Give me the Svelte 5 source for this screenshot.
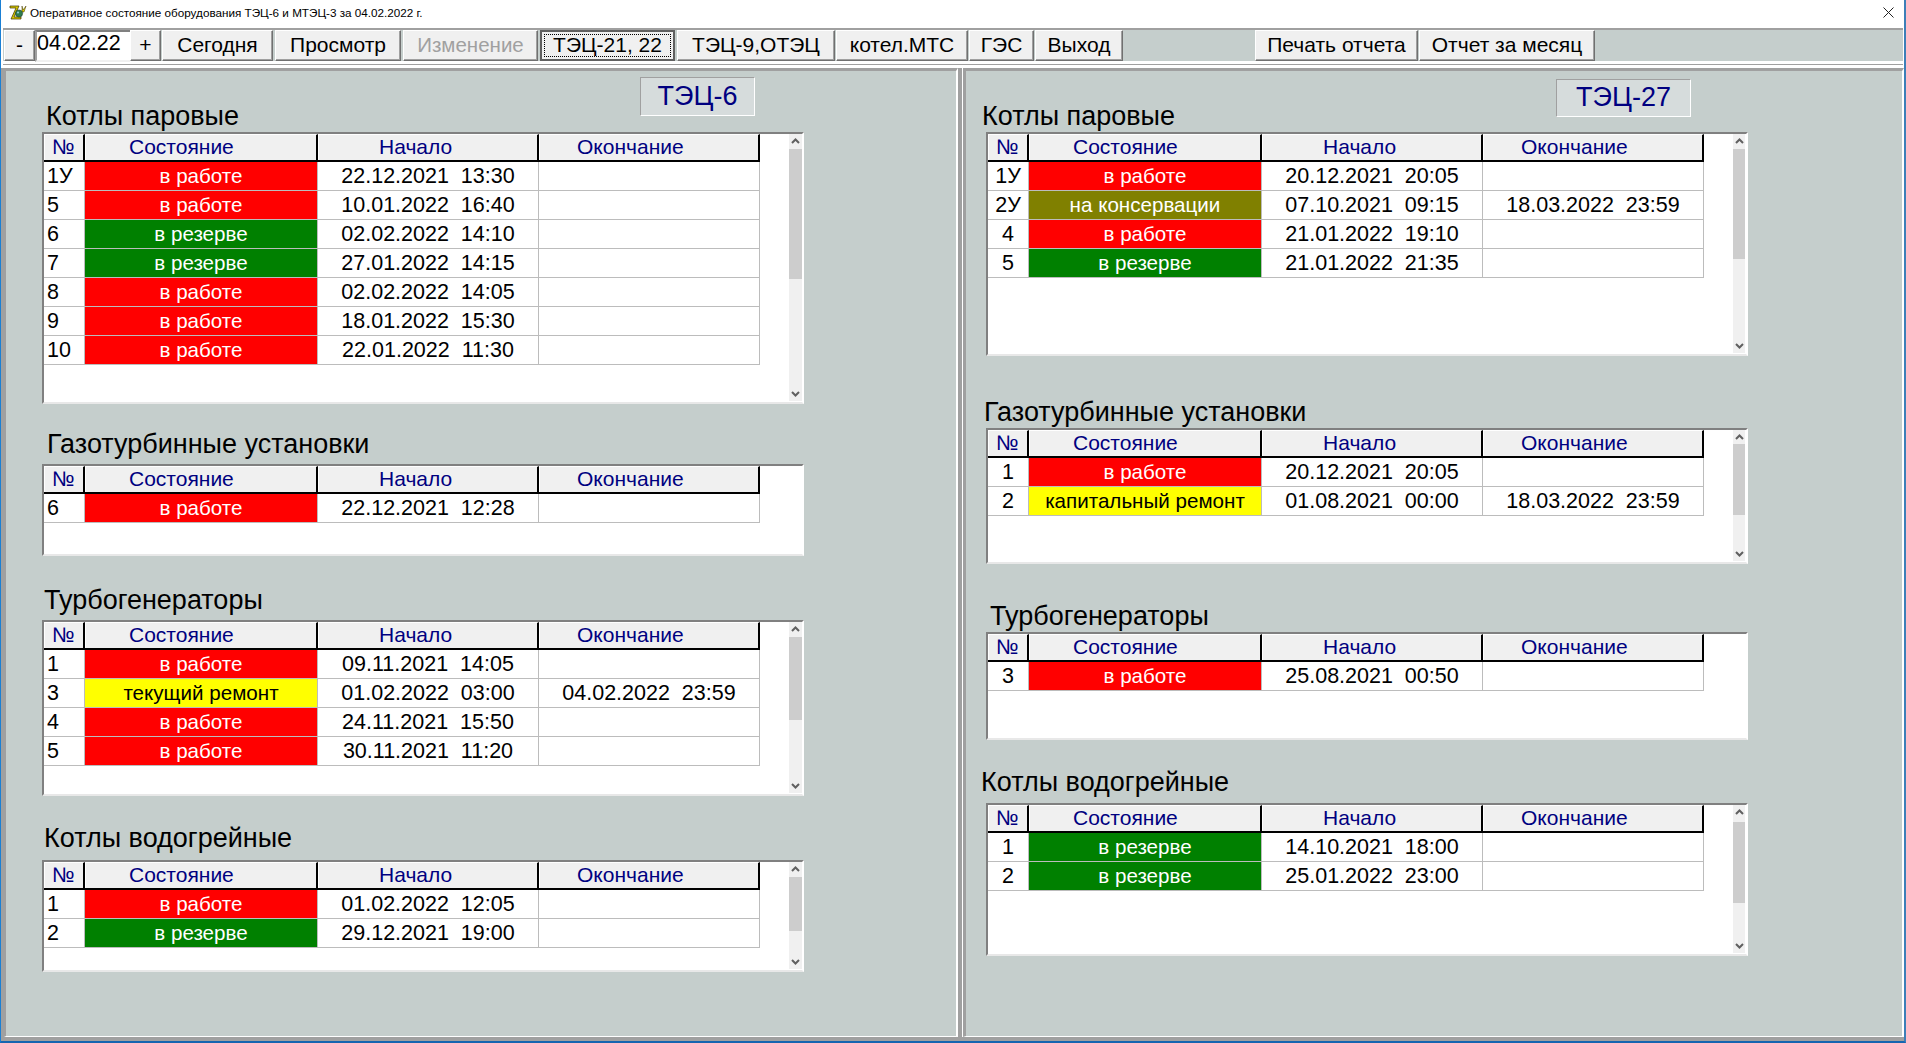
<script>
  const left = [
    { title: 'Котлы паровые', gap: 0, head: 61, pb: 0, tx: 44, h: 272, thumb: [15, 130], rows: [
      ['1У','r','22.12.2021  13:30',''],['5','r','10.01.2022  16:40',''],['6','g','02.02.2022  14:10',''],['7','g','27.01.2022  14:15',''],['8','r','02.02.2022  14:05',''],['9','r','18.01.2022  15:30',''],['10','r','22.01.2022  11:30','']]},
    { title: 'Газотурбинные установки', gap: 26, head: 34, pb: 4, tx: 45, h: 92, rows: [['6','r','22.12.2021  12:28','']]},
    { title: 'Турбогенераторы', gap: 30, head: 34, pb: 4, tx: 42, h: 176, thumb: [15, 83], rows: [
      ['1','r','09.11.2021  14:05',''],['3','y:текущий ремонт','01.02.2022  03:00','04.02.2022  23:59'],['4','r','24.11.2021  15:50',''],['5','r','30.11.2021  11:20','']]},
    { title: 'Котлы водогрейные', gap: 30, head: 34, pb: 6, tx: 42, h: 112, thumb: [15, 54], rows: [
      ['1','r','01.02.2022  12:05',''],['2','g','29.12.2021  19:00','']]},
  ];
  const right = [
    { title: 'Котлы паровые', gap: 0, head: 61, pb: 0, tx: 16, h: 224, thumb: [15, 110], rows: [
      ['1У','r','20.12.2021  20:05',''],['2У','o:на консервации','07.10.2021  09:15','18.03.2022  23:59'],['4','r','21.01.2022  19:10',''],['5','g','21.01.2022  21:35','']]},
    { title: 'Газотурбинные установки', gap: 38, head: 34, pb: 0, tx: 18, h: 136, thumb: [14, 71], rows: [
      ['1','r','20.12.2021  20:05',''],['2','y:капитальный ремонт','01.08.2021  00:00','18.03.2022  23:59']]},
    { title: 'Турбогенераторы', gap: 34, head: 34, pb: 0, tx: 24, h: 108, rows: [['3','r','25.08.2021  00:50','']]},
    { title: 'Котлы водогрейные', gap: 29, head: 34, pb: 5, tx: 15, h: 153, thumb: [17, 81], rows: [
      ['1','g','14.10.2021  18:00',''],['2','g','25.01.2022  23:00','']]},
  ];
  const names = { r: 'в работе', g: 'в резерве' };
  const parse = (s) => {
    const [c, t] = s.split(':');
    return { c, t: t ?? names[c] };
  };
  const panels = [
    { badge: 'ТЭЦ-6', cls: 'pl', sections: left },
    { badge: 'ТЭЦ-27', cls: 'pr', sections: right },
  ];
</script>

<div class="window">
  <div class="titlebar">
    <svg class="appicon" width="18" height="16" viewBox="0 0 18 16">
      <path d="M1 1h9l-5 11h7v2H2l5-11H1z" fill="#d8c800" stroke="#3a3000" stroke-width=".7"/>
      <path d="M13 1l1 4 3-4-2 6h-2z" fill="#e0d000" stroke="#3a3000" stroke-width=".5"/>
      <circle cx="10" cy="8.5" r="3.6" fill="#2f7d4f" stroke="#1c3d2c" stroke-width=".6"/>
      <circle cx="9" cy="7.5" r="1.1" fill="#8fc7d8"/>
    </svg>
    <span class="wintitle">Оперативное состояние оборудования ТЭЦ-6 и МТЭЦ-3 за 04.02.2022 г.</span>
    <svg class="close" width="11" height="11" viewBox="0 0 11 11"><path d="M.5.5l10 10M10.5.5l-10 10" stroke="#222" stroke-width="1" fill="none"/></svg>
  </div>

  <div class="toolbar">
    <button class="w-pm">-</button>
    <div class="dateinput">04.02.22</div>
    <button class="w-pm plus">+</button>
    <button class="w-today">Сегодня</button>
    <button class="w-view">Просмотр</button>
    <button class="w-edit" disabled>Изменение</button>
    <button class="w-edit active"><span class="focus">ТЭЦ-21, 22</span></button>
    <button class="w-t9">ТЭЦ-9,ОТЭЦ</button>
    <button class="w-mts">котел.МТС</button>
    <button class="w-ges">ГЭС</button>
    <button class="w-exit">Выход</button>
    <button class="w-print">Печать отчета</button>
    <button class="w-month">Отчет за месяц</button>
  </div>

  <div class="panels">
    {#each panels as p}
      <div class="panel {p.cls}">
        <div class="badge">{p.badge}</div>
        {#each p.sections as s}
          <section style="margin-top:{s.gap}px">
            <h2 style="height:{s.head}px;padding-left:{s.tx}px;padding-bottom:{s.pb}px">{s.title}</h2>
            <div class="box" style="height:{s.h}px">
              <div class="grid">
                <div class="row headrow">
                  <div class="hc c0">№</div>
                  <div class="hc c1">Состояние</div>
                  <div class="hc c2">Начало</div>
                  <div class="hc c3">Окончание</div>
                </div>
                {#each s.rows as r}
                  {@const st = parse(r[1])}
                  <div class="row">
                    <div class="td c0 num">{r[0]}</div>
                    <div class="td c1 state {st.c}">{st.t}</div>
                    <div class="td c2 date">{r[2]}</div>
                    <div class="td c3 date">{r[3]}</div>
                  </div>
                {/each}
              </div>
              {#if s.thumb}
                <div class="scroll">
                  <svg class="arrow up" width="9" height="6" viewBox="0 0 9 6"><path d="M1 5l3.5-3.5L8 5" fill="none" stroke="#606060" stroke-width="2"/></svg>
                  <div class="thumb" style="margin-top:{s.thumb[0]}px;height:{s.thumb[1]}px"></div>
                  <svg class="arrow down" width="9" height="6" viewBox="0 0 9 6"><path d="M1 1l3.5 3.5L8 1" fill="none" stroke="#606060" stroke-width="2"/></svg>
                </div>
              {/if}
            </div>
          </section>
        {/each}
      </div>
    {/each}
  </div>
</div>

<style>
  :global(body) { margin: 0; background: #fff; }
  .window {
    width: 1906px; height: 1043px; box-sizing: border-box; overflow: hidden;
    background: #fff; display: flex; flex-direction: column;
    border-left: 1px solid #1a7fd4; border-right: 2px solid #3d7fb8; border-bottom: 2px solid #1565b0;
    font-family: "Liberation Sans", Arial, sans-serif; color: #000;
  }
  .titlebar { height: 28px; flex: none; display: flex; align-items: center; padding: 0 8px 0 8px; position: relative; }
  .appicon { flex: none; margin: -2px 3px 0 0; }
  .wintitle { font-size: 11.7px; white-space: nowrap; font-family: "Liberation Sans", sans-serif; margin-top: -3px; }
  .close { margin-left: auto; margin-top: -4px; margin-right: 2px; }

  .toolbar {
    height: 36px; flex: none; box-sizing: border-box; margin: 0 0 4px 2px;
    background: #c5cecc; border-top: 2px solid #a0a0a0; border-bottom: 3px solid #fff;
    outline: 0; display: flex; align-items: flex-start; padding: 0 0 0 1px;
    box-shadow: 0 1px 0 #a0a0a0;
    width: 1900px;
  }
  button {
    flex: none; height: 31px; margin: 0 2px 0 0; padding: 0 0 2px; box-sizing: border-box;
    background: #f0f0f0; border: 1px solid; border-color: #fff #707070 #707070 #fff;
    box-shadow: inset -1px -1px 0 #a0a0a0;
    font: 21px "Liberation Sans", Arial, sans-serif; color: #000; white-space: nowrap;
  }
  button[disabled] { color: #a0a0a0; text-shadow: none; font-size: 20.5px; }
  .w-pm { width: 31px; margin-right: 0; }
  .plus { margin-right: 1px; }
  .dateinput {
    flex: none; width: 95px; height: 32px; box-sizing: border-box; background: #fff;
    border: 2px solid; border-color: #a0a0a0 #f0f0f0 #f0f0f0 #a0a0a0; border-right: 0; border-top: 2px solid #808080;
    font-size: 21.5px; line-height: 23px; padding-left: 0;
  }
  .w-today { width: 111px; }
  .w-view { width: 126px; }
  .w-edit { width: 135px; }
  .active { border: 2px solid #606060; box-shadow: none; padding: 2px; display: flex; }
  .focus { flex: 1; border: 1px dotted #000; line-height: 19px; }
  .w-t9 { width: 158px; margin-right: 1px; }
  .w-mts { width: 132px; margin-right: 1px; }
  .w-ges { width: 65px; margin-right: 1px; }
  .w-exit { width: 88px; margin-right: 132px; }
  .w-print { width: 163px; margin-right: 1px; }
  .w-month { width: 176px; }

  .panels { flex: 1; display: flex; background: #a0a0a0; min-height: 0; padding-left: 3px; padding-bottom: 4px; }
  .panel {
    position: relative; box-sizing: border-box; background: #c5cecc; flex: none;
    border: 3px solid; border-color: #a0a0a0 #fff #fff #a0a0a0; border-width: 3px 2px 1px 2px;
  }
  .pl { width: 954px; margin-right: 5px; padding-left: 36px; }
  .pr { width: 941px; padding-left: 20px; border-left-width: 3px; box-shadow: -1px 0 0 #fff; }

  .badge {
    position: absolute; box-sizing: border-box; background: #d6dcdc; color: #000080;
    border: 1px solid; border-color: #a0a0a0 #fff #fff #a0a0a0;
    display: flex; align-items: center; justify-content: center; font-size: 27px;
  }
  .pl .badge { left: 634px; top: 6px; width: 115px; height: 39px; }
  .pr .badge { left: 590px; top: 8px; width: 135px; height: 38px; padding-bottom: 2px; }

  section { display: block; }
  h2 {
    margin: 0 0 0 -40px; box-sizing: border-box; font-weight: normal; font-size: 27px;
    display: flex; align-items: flex-end; white-space: nowrap; line-height: 32px; position: relative;
  }
  .pr h2 { margin-left: -20px; }
  .box {
    box-sizing: border-box; background: #fff; display: flex; justify-content: space-between;
    border: 2px solid; border-color: #808080 #fff #e8e8e8 #808080; border-top-width: 2px;
  }
  .pl .box { width: 762px; }
  .pr .box { width: 762px; }
  .grid { flex: none; width: 716px; }
  .row { display: grid; height: 29px; box-sizing: border-box; }
  .pl .row { grid-template-columns: 41px 233px 221px 221px; }
  .pr .row { grid-template-columns: 41px 233px 221px 221px; }
  .headrow { height: 28px; border-bottom: 2px solid #000; }
  .hc {
    background: #f0f0f0; color: #000080; font-size: 21px; line-height: 23px; box-sizing: border-box;
    border-right: 2px solid #000; border-left: 1px solid #fff; border-top: 1px solid #fff; white-space: nowrap;
  }
  .hc.c0 { padding-left: 7px; }
  .hc.c1 { padding-left: 43px; }
  .hc.c2 { padding-left: 60px; }
  .hc.c3 { padding-left: 37px; }
  .td {
    border-right: 1px solid #bcbcbc; border-bottom: 1px solid #bcbcbc; box-sizing: border-box;
    font-size: 21.5px; line-height: 28px; white-space: pre; text-align: center;
  }
  .pl .num { text-align: left; padding-left: 3px; }
  .state { color: #fff; font-size: 20.6px; }
  .r { background: #ff0000; }
  .g { background: #008000; }
  .o { background: #808000; }
  .y { background: #ffff00; color: #000; }

  .scroll { flex: none; width: 13px; margin: 0 0 1px 0; background: #f0f0f0; position: relative; }
  .pr .scroll { margin-right: 1px; width: 12px; }
  .thumb { background: #cdcdcd; }
  .arrow { position: absolute; left: 2px; }
  .up { top: 4px; }
  .down { bottom: 4px; }
</style>
